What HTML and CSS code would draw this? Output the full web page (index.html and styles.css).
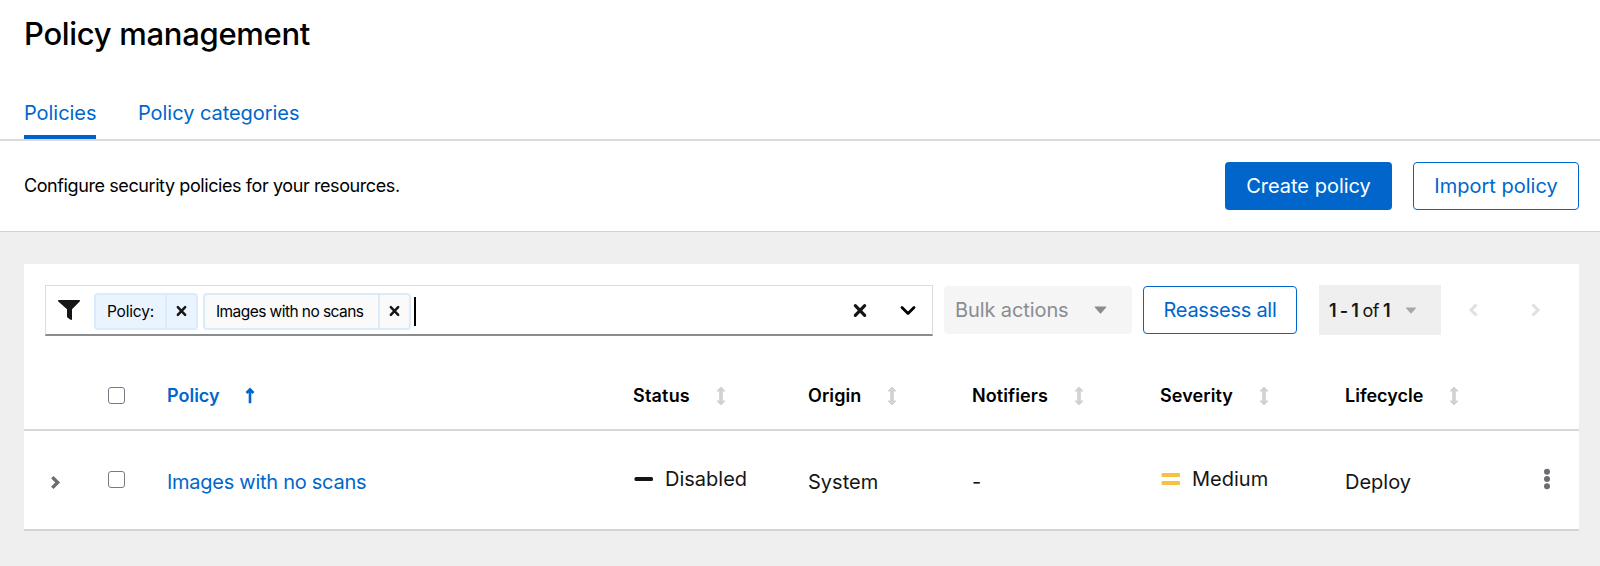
FILE: index.html
```html
<!DOCTYPE html>
<html lang="en">
<head>
<meta charset="utf-8">
<title>Policy management</title>
<link rel="stylesheet" href="styles.css">
</head>
<body>
<svg class="defs" width="0" height="0" aria-hidden="true">
  <symbol id="sort" viewBox="0 0 10 20"><path d="M5 1 9 5H6.300v10H9L5 19 1 15h2.700V5H1z" stroke="#d2d2d2" stroke-width="1" stroke-linejoin="round"/></symbol>
  <symbol id="times" viewBox="0 0 12 12"><path d="M2 1.800 10 10.200M10 1.800 2 10.200" fill="none" stroke="currentColor" stroke-width="2.700" stroke-linecap="round"/></symbol>
  <symbol id="caret" viewBox="0 0 12 8"><path d="M.8.500h10.400c.6 0 .8.600.4 1L6.600 7.200c-.3.300-.9.300-1.200 0L.4 1.500C0 1.100.2.500.8.500z" fill="currentColor"/></symbol>
</svg>
<header class="masthead">
  <h1 class="title">Policy management</h1>
  <nav class="tabs">
    <a class="tab tab-current">Policies</a>
    <a class="tab tab-wide">Policy categories</a>
  </nav>
</header>
<section class="intro">
  <p class="intro-text">Configure security policies for your resources.</p>
  <div class="intro-actions">
    <button class="btn btn-primary">Create policy</button>
    <button class="btn btn-secondary">Import policy</button>
  </div>
</section>
<main class="card">
  <div class="toolbar">
    <div class="search">
      <svg class="filter" viewBox="0 0 22 20"><path d="M1 0h20c.9 0 1.300 1 .7 1.600L14 9.300v9.700c0 .8-.8 1.200-1.500.8l-3-2.200c-.3-.2-.5-.5-.5-.8V9.300L.3 1.600C-.3 1 .1 0 1 0z" fill="#151515"/></svg>
      <div class="chip chip-key"><span class="chip-text">Policy:</span><span class="chip-close"><svg width="11" height="12"><use href="#times"/></svg></span></div>
      <div class="chip chip-value"><span class="chip-text">Images with no scans</span><span class="chip-close"><svg width="11" height="12"><use href="#times"/></svg></span></div>
      <span class="cursor"></span>
      <svg class="clear" width="14" height="15"><use href="#times"/></svg>
      <svg class="open" width="16" height="11" viewBox="0 0 16 11"><path d="M2 2.500 8 8.500l6-6" fill="none" stroke="#000" stroke-width="2.800" stroke-linecap="round" stroke-linejoin="round"/></svg>
    </div>
    <button class="bulk"><span>Bulk actions</span><svg width="13" height="8"><use href="#caret"/></svg></button>
    <button class="btn btn-secondary btn-reassess">Reassess all</button>
    <button class="range"><span><b>1 - 1</b> of <b>1</b></span><svg width="12" height="7"><use href="#caret"/></svg></button>
    <div class="pager">
      <svg width="10" height="14" viewBox="0 0 10 14"><path d="M8.500 1.500 3 7l5.500 5.500"/></svg>
      <svg width="10" height="14" viewBox="0 0 10 14"><path d="m1.500 1.500 5.500 5.500-5.500 5.500"/></svg>
    </div>
  </div>
  <div class="row row-head">
    <span></span>
    <span class="check"></span>
    <span class="th th-sorted"><span>Policy</span><svg width="10" height="18" viewBox="0 0 10 18"><path d="M5 16.300V3M1.500 6 5 2.300 8.500 6" fill="none" stroke="currentColor" stroke-width="2.600"/></svg></span>
    <span class="th"><span class="l-status">Status</span><svg width="10" height="20"><use href="#sort"/></svg></span>
    <span class="th"><span class="l-origin">Origin</span><svg width="10" height="20"><use href="#sort"/></svg></span>
    <span class="th"><span class="l-notifiers">Notifiers</span><svg width="10" height="20"><use href="#sort"/></svg></span>
    <span class="th"><span class="l-severity">Severity</span><svg width="10" height="20"><use href="#sort"/></svg></span>
    <span class="th"><span class="l-lifecycle">Lifecycle</span><svg width="10" height="20"><use href="#sort"/></svg></span>
    <span></span>
  </div>
  <div class="row row-body">
    <span class="toggle"><svg width="11" height="15" viewBox="0 0 10 14"><path d="m2 2 5 5-5 5" fill="none" stroke="#6a6e73" stroke-width="3.200"/></svg></span>
    <span class="check"></span>
    <a class="td td-link">Images with no scans</a>
    <span class="td td-icon"><svg width="20" height="14"><rect x="1.500" y="5" width="18.500" height="4" rx="1.500" fill="#151515"/></svg><span>Disabled</span></span>
    <span class="td">System</span>
    <span class="td">-</span>
    <span class="td td-icon"><svg width="20" height="14"><rect x="1.500" y="1" width="18.500" height="4" rx="1" fill="#f4c145"/><rect x="1.500" y="9" width="18.500" height="4" rx="1" fill="#f4c145"/></svg><span>Medium</span></span>
    <span class="td">Deploy</span>
    <svg class="kebab" width="8" height="22" viewBox="0 0 8 22"><circle cx="4" cy="3.700" r="3"/><circle cx="4" cy="11" r="3"/><circle cx="4" cy="18.300" r="3"/></svg>
  </div>
</main>
</body>
</html>
```
FILE: styles.css
```css
* { box-sizing: border-box; }
body { margin: 0; height: 566px; background: #efefef; color: #151515; font-family: Inter, "Open Sans", sans-serif; font-size: 20px; font-weight: 380; }
.defs { display: block; position: absolute; }
svg { flex: none; }
button { font: inherit; padding: 0; border: 0; }
span, a, button { white-space: nowrap; }
.masthead { height: 141px; background: #fff; border-bottom: 2px solid #dadada; padding: 14px 24px 0; }
.title { margin: 0; height: 40px; line-height: 40px; font-size: 31px; font-weight: 500; letter-spacing: -.3px; color: #000; }
.tabs { display: flex; gap: 42px; margin-top: 39px; }
.tab { height: 46px; line-height: 40px; color: #06c; letter-spacing: -.05px; }
.tab-current { width: 72px; border-bottom: 4px solid #0060ce; }
.intro { height: 91px; background: #fff; border-bottom: 1px solid #d2d2d2; display: flex; justify-content: space-between; align-items: center; padding: 0 21px 0 24px; }
.intro-text { margin: -1px 0 0; font-size: 18px; letter-spacing: -.41px; color: #000; }
.intro-actions { display: flex; gap: 21px; }
.btn { height: 48px; width: 167px; border-radius: 4px; }
.intro .btn-secondary { width: 166px; }
.btn-primary { background: #06c; color: #fff; }
.btn-secondary { background: #fff; color: #06c; border: 1px solid #06c; }
.card { margin: 32px 21px 0 24px; background: #fff; }
.toolbar { height: 94px; padding: 21px 0 0 21px; display: flex; align-items: flex-start; }
.search { width: 888px; height: 51px; border: 1px solid #dcdcdc; border-bottom: 2px solid #8a8d90; display: flex; align-items: center; padding: 0 16px 0 12px; }
.filter { width: 22px; height: 20px; margin-right: 14px; }
.chip { height: 37px; display: flex; border: 2px solid #daebfb; border-radius: 4px; font-size: 15.500px; line-height: 33px; letter-spacing: -.2px; color: #000; margin: 2px 5px 0 0; }
.chip-text { padding-left: 11px; border-right: 2px solid #daebfb; }
.chip-close { flex: 1; display: flex; align-items: center; justify-content: center; color: #151515; padding-right: 1px; }
.chip-key { width: 104px; background: #e9f4ff; }
.chip-key .chip-text { width: 71px; }
.chip-value { width: 208px; background: #fafafa; margin-right: 3px; letter-spacing: -.56px; }
.chip-value .chip-text { width: 175px; }
.cursor { width: 1.500px; height: 29px; background: #000; margin-top: 3px; }
.clear { margin-left: auto; margin-right: 33px; }
.bulk { width: 188px; height: 48px; margin: 1px 0 0 11px; background: #f5f5f5; border-radius: 4px; color: #8a8d90; padding: 0 25px 0 11px; display: flex; align-items: center; justify-content: space-between; }
.bulk span { letter-spacing: -.1px; }
.btn-reassess { width: 154px; margin: 1px 0 0 11px; letter-spacing: -.25px; }
.range { width: 122px; height: 50px; margin-left: 22px; background: #efefef; padding: 0 24px 0 10px; display: flex; align-items: center; justify-content: space-between; color: #a5a8ab; font-size: 18px; }
.range span { color: #151515; letter-spacing: -.7px; }
.range b { font-weight: 600; }
.pager { height: 50px; display: flex; align-items: center; gap: 53px; margin-left: 27px; }
.pager path { fill: none; stroke: #e0e0e0; stroke-width: 3px; }
.row { display: grid; grid-template-columns: 84px 59px 466px 175px 164px 188px 185px 195px 39px; align-items: center; }
.row-head { height: 73px; border-bottom: 2px solid #d8d8d8; padding-top: 4px; }
.row-body { height: 100px; border-bottom: 2px solid #d4d4d4; }
.check { width: 17px; height: 17px; border: 1.500px solid #767b85; border-radius: 3px; }
.row-body .check { margin-top: -2px; }
.th { display: flex; align-items: center; gap: 26px; font-size: 18px; font-weight: 600; color: #000; }
.th svg { fill: #d2d2d2; }
.th-sorted { color: #06c; gap: 25px; }
.l-status { letter-spacing: .2px; }
.l-origin, .l-notifiers, .l-severity { letter-spacing: .1px; }
.td { color: #151515; padding-top: 4px; }
.td-link { color: #06c; letter-spacing: -.27px; }
.td-icon { display: flex; align-items: center; gap: 12px; padding-top: 0; margin-top: -3px; }
.toggle { display: flex; padding: 4px 0 0 26px; }
.kebab { margin-left: 3px; fill: #6a6e73; margin-top: -3px; }
```
